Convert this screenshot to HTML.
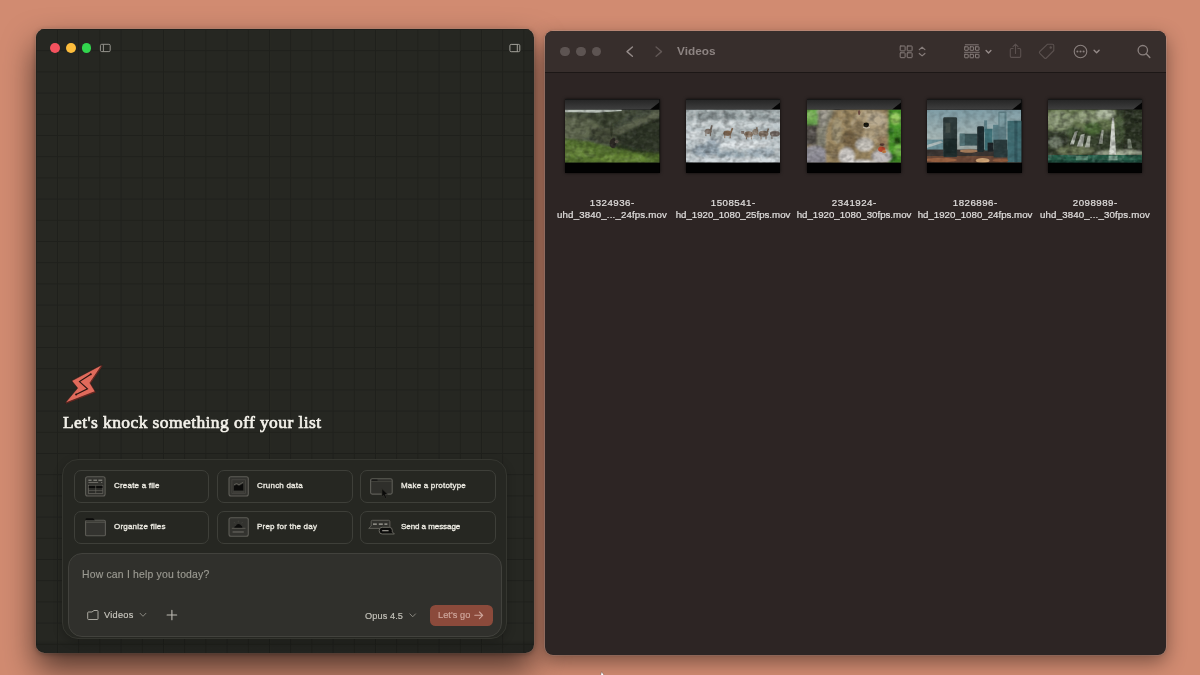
<!DOCTYPE html>
<html lang="en">
<head>
<meta charset="utf-8">
<title>Videos</title>
<style>
html,body{margin:0;padding:0;}
body{width:1200px;height:675px;overflow:hidden;background:#d18b71;position:relative;font-family:"Liberation Sans",sans-serif;}
.abs{position:absolute;}
#heading,.chip span,#ph,.sm,#go span,#ftitle,.lbl{will-change:transform;}
/* ---------- left app window ---------- */
#app{position:absolute;left:36.2px;top:29px;width:497.4px;height:624.4px;border-radius:8.5px;background:#262722;overflow:hidden;}
#appshadow{position:absolute;left:36.2px;top:29px;width:497.4px;height:624.4px;border-radius:8.5px;box-shadow:0 16px 32px rgba(0,0,0,.62),0 1px 5px rgba(0,0,0,.3),0 0 0 .6px rgba(255,255,255,.2);}
#app svg.grid{position:absolute;left:0;top:0;}
.tl{position:absolute;width:9.8px;height:9.8px;border-radius:50%;top:14.2px;}
#heading{position:absolute;left:26.3px;top:382.5px;font-family:"Liberation Serif",serif;font-weight:normal;font-size:17.5px;color:#f3f1ea;white-space:nowrap;line-height:20px;letter-spacing:.4px;-webkit-text-stroke:.65px #f3f1ea;}
#card{position:absolute;left:25.7px;top:429.5px;width:445.2px;height:180px;border-radius:16px;border:1px solid #353630;box-sizing:border-box;background:#262722;box-shadow:0 3px 10px rgba(0,0,0,.22);}
.chip{position:absolute;width:135.6px;height:33px;border:1px solid #3e3f39;border-radius:7px;box-sizing:border-box;background:#262722;}
.chip span{position:absolute;left:39.2px;top:9.15px;font-size:8px;letter-spacing:.2px;line-height:12px;color:#edebe3;white-space:nowrap;-webkit-text-stroke:.32px #edebe3;}
.chip svg{position:absolute;left:-1px;top:-1px;}
#input{position:absolute;left:31.5px;top:523.5px;width:433.8px;height:84px;border-radius:14px;border:1px solid #42423d;box-sizing:border-box;background:#30302c;}
#ph{position:absolute;left:12.9px;top:14.1px;font-size:10.4px;letter-spacing:.2px;-webkit-text-stroke:.15px #9b9a92;line-height:14px;color:#9b9a92;white-space:nowrap;}
.sm{position:absolute;-webkit-text-stroke:.15px #c9c7bf;font-size:9.2px;line-height:12px;color:#c9c7bf;white-space:nowrap;}
#go{position:absolute;left:361px;top:50.5px;width:62.8px;height:21.4px;border-radius:5.5px;background:#8b4a3b;}
#go span{position:absolute;left:8.4px;top:4.8px;font-size:9.2px;letter-spacing:.07px;-webkit-text-stroke:.18px #cfa79c;line-height:12px;color:#cfa79c;white-space:nowrap;}
/* ---------- finder window ---------- */
#finder{position:absolute;left:544.5px;top:30.5px;width:621px;height:624px;border-radius:8px;background:#2d2524;overflow:hidden;}
#findershadow{position:absolute;left:544.5px;top:30.5px;width:621px;height:624px;border-radius:8px;box-shadow:0 7px 20px rgba(0,0,0,.42),0 0 0 .6px rgba(255,255,255,.3),0 0 3px rgba(0,0,0,.2);}
#tbar{position:absolute;left:0;top:0;width:621px;height:41.5px;background:#372e2c;border-bottom:1px solid #1c1716;}
.gl{position:absolute;width:9.6px;height:9.6px;border-radius:50%;background:#5d5452;top:16px;}
#ftitle{position:absolute;left:132.5px;top:13px;font-size:11.8px;line-height:15px;font-weight:bold;color:#8d8482;white-space:nowrap;}
.thumb{position:absolute;top:68.6px;width:94.4px;height:73.9px;background:#000;box-shadow:0 0 3px rgba(0,0,0,.75);}
.l1{letter-spacing:.5px;margin-left:.5px}.l2{letter-spacing:.15px}
.thumb svg{position:absolute;left:0;top:0;}
.lbl{position:absolute;top:166.8px;width:140px;text-align:center;font-size:9.7px;line-height:12.25px;color:#e0dedd;white-space:nowrap;-webkit-text-stroke:.2px #e0dedd;}
</style>
</head>
<body>

<div id="appshadow"></div>
<div id="app">
  <svg class="grid" width="497" height="624" viewBox="0 0 497 624">
    <defs>
      <pattern id="gp" width="21.2" height="21.2" patternUnits="userSpaceOnUse" x="-0.2" y="0">
        <path d="M0.5 0V21.2M0 0.5H21.2" stroke="#1f201c" stroke-width="1" fill="none"/>
      </pattern>
    </defs>
    <rect width="497" height="624" fill="url(#gp)"/>
  </svg>
  <div class="abs" style="left:0;bottom:0;width:100%;height:14px;background:linear-gradient(rgba(0,0,0,0),rgba(0,0,0,.1) 30%)"></div>
  <div class="tl" style="left:13.7px;background:#f4525e;"></div>
  <div class="tl" style="left:29.6px;background:#fdbd3c;"></div>
  <div class="tl" style="left:45.4px;background:#32d64e;"></div>
  <svg class="abs" style="left:63px;top:13.5px" width="13" height="10" viewBox="0 0 13 10"><rect x="1.4" y="1.3" width="9.8" height="7.3" rx="1.3" fill="none" stroke="#94938c" stroke-width="1"/><path d="M4.4 1.4V8.5" stroke="#94938c" stroke-width="1"/></svg>
  <svg class="abs" style="left:472px;top:13.5px" width="13" height="10" viewBox="0 0 13 10"><rect x="1.9" y="1.4" width="9.9" height="7.3" rx="1.3" fill="none" stroke="#a4a39c" stroke-width="1"/><path d="M9.3 1.5V8.6" stroke="#a4a39c" stroke-width="1"/></svg>

  <div class="abs" style="left:.3px;top:.5px;width:0;height:0">
  <!-- logo -->
  <svg class="abs" style="left:26px;top:332px" width="44" height="44" viewBox="62.5 361.5 44 44">
    <polygon points="102.6,364.2 72.3,380.3 78.2,387.6 65.6,402.6 95.6,391 90.4,382.4" fill="#7f261f" transform="translate(.6,.7)"/>
    <polygon points="102.6,364.2 72.3,380.3 78.2,387.6 65.6,402.6 95.6,391 90.4,382.4" fill="#e06a5b" stroke="#1c1412" stroke-width=".5"/>
    <polyline points="91.3,373.7 80,381.1 88,388.3 76.6,394.1" fill="none" stroke="#2a1512" stroke-width="1.15"/>
    <circle cx="91.3" cy="373.7" r="1" fill="#2a1512"/><circle cx="76.6" cy="394.1" r="1" fill="#2a1512"/>
  </svg>

  <div id="heading">Let's knock something off your list</div>

  <div id="card"></div>
  <div class="chip" style="left:37.2px;top:440.6px"><svg width="135.6" height="33" viewBox="74 470 135.6 33" fill="none"><rect x="85.6" y="476.8" width="19.5" height="19.2" rx="2" fill="#33332f" stroke="#5e5d57" stroke-width="1.1"/>
<path d="M88.4 480.2H91.6M93.4 480.2H97M98.4 480.2H102.3" stroke="#b4b2aa" stroke-width=".8"/>
<path d="M88.4 482.5H98.2M101 482.5H102.3" stroke="#85837b" stroke-width=".7"/>
<rect x="88.5" y="485.3" width="14.3" height="8.2" fill="#2b2b28" stroke="#6b6a63" stroke-width=".7"/>
<rect x="88.8" y="485.7" width="13.7" height="2.3" fill="#0c0c0b"/>
<path d="M95.7 485.5V493.4M88.6 490.6H102.7" stroke="#6b6a63" stroke-width=".6"/></svg><span>Create a file</span></div>
  <div class="chip" style="left:180.6px;top:440.6px"><svg width="135.6" height="33" viewBox="217 470 135.6 33" fill="none"><rect x="229" y="476.8" width="19.3" height="19.2" rx="2" fill="#33332f" stroke="#5e5d57" stroke-width="1.1"/>
<rect x="231.9" y="479.8" width="13.5" height="13.5" fill="none" stroke="#4c4b45" stroke-width=".7"/>
<polygon points="234,486 236.6,484.8 239,486 243.2,483.5 243.2,490.6 234,490.6" fill="#0c0c0b"/>
<polyline points="234,484.7 236.6,483.5 239,484.7 243.2,482.2" stroke="#7b7971" stroke-width=".6"/>
<path d="M233 492H244.4" stroke="#5a5953" stroke-width=".6"/></svg><span>Crunch data</span></div>
  <div class="chip" style="left:324px;top:440.6px"><svg width="135.6" height="33" viewBox="360.4 470 135.6 33" fill="none"><rect x="371" y="478.7" width="21.6" height="15.4" rx="1.6" fill="#2f2f2b" stroke="#5e5d57" stroke-width="1.1"/>
<rect x="372.1" y="479.6" width="5.8" height="1" fill="#0c0c0b"/>
<path d="M371.4 481.5H392.4" stroke="#4c4b45" stroke-width=".6"/>
<path d="M382.3 488.6L388.1 494.3L385.5 494.6L387 497.8L385.6 498.5L384.1 495.2L382.3 496.8Z" fill="#0a0a09" stroke="#3a3935" stroke-width=".5"/></svg><span>Make a prototype</span></div>
  <div class="chip" style="left:37.2px;top:481.5px"><svg width="135.6" height="33" viewBox="74 511 135.6 33" fill="none"><rect x="85.6" y="520.3" width="19.8" height="15.5" rx="1.4" fill="#33332f" stroke="#5e5d57" stroke-width="1.1"/>
<path d="M85.6 519.2Q85.6 518.3 86.6 518.3H92.6Q93.4 518.3 93.9 519L94.8 520.3H85.6Z" fill="#0c0c0b"/>
<path d="M86.2 522.2H104.9" stroke="#6b6a63" stroke-width=".7"/></svg><span>Organize files</span></div>
  <div class="chip" style="left:180.6px;top:481.5px"><svg width="135.6" height="33" viewBox="217 511 135.6 33" fill="none"><rect x="229" y="517.7" width="19.3" height="18.6" rx="2" fill="#33332f" stroke="#5e5d57" stroke-width="1.1"/>
<path d="M234.3 528Q234.2 526.2 235.9 526Q236.4 523.9 238.5 523.9Q240.5 523.9 241.1 525.6Q242.5 525.9 242.4 528Z" fill="#0c0c0b"/>
<path d="M231.8 528.3H245.5" stroke="#6b6a63" stroke-width=".7"/>
<path d="M232.6 532H243.8" stroke="#8b8981" stroke-width=".7"/>
<path d="M238.3 520.6V522.4M234 522L235 523.4M242.6 522L241.6 523.4" stroke="#4c4b45" stroke-width=".6"/></svg><span>Prep for the day</span></div>
  <div class="chip" style="left:324px;top:481.5px"><svg width="135.6" height="33" viewBox="360.4 511 135.6 33" fill="none"><path d="M369.1 528.4L371.6 526V521.6Q371.6 520.3 372.9 520.3H389Q390.3 520.3 390.3 521.6V527.1Q390.3 528.4 389 528.4Z" fill="#30302c" stroke="#5e5d57" stroke-width="1"/>
<path d="M373.4 524.1H377.2M379.2 524.1H383.2M384.8 524.1H387.8" stroke="#a8a69e" stroke-width="1.1"/>
<path d="M394.8 534L392.7 531.9V530.3Q392.7 527.3 389.7 527.3H382.6Q379.6 527.3 379.6 530.3V531Q379.6 534 382.6 534Z" fill="#0b0b0a" stroke="#6a6962" stroke-width="1"/>
<path d="M382.6 530.7H389" stroke="#a8a69e" stroke-width="1.1"/></svg><span style="letter-spacing:-.06px">Send a message</span></div>

  <div id="input">
    <div id="ph">How can I help you today?</div>
    <div class="sm" style="left:34.6px;top:54.8px;letter-spacing:.28px">Videos</div>
    <div class="sm" style="left:296px;top:55.7px;letter-spacing:.1px;color:#c2c0b8">Opus 4.5</div>
    <div id="go"><span>Let's go</span></div>
    <svg class="abs" style="left:-1px;top:-1px" width="434.5" height="84" viewBox="68 553 434.5 84" fill="none" stroke-linecap="round" stroke-linejoin="round">
      <path d="M87.7 612.6Q87.7 612 88.3 612H92L94 610.5H97.4Q98 610.5 98 611.1V618.9Q98 619.5 97.4 619.5H88.3Q87.7 619.5 87.7 618.9Z" stroke="#aaa8a0" stroke-width="1"/>
      <path d="M140.1 613.3L143 616.3L145.9 613.3" stroke="#8a8880" stroke-width="1"/>
      <path d="M167.1 615H176.7M171.9 610.2V619.8" stroke="#bdbbb3" stroke-width="1.1"/>
      <path d="M409.9 613.9L412.7 616.8L415.5 613.9" stroke="#8a8880" stroke-width="1"/>
      <path d="M474.8 615.3H482.6M479.4 612L482.7 615.3L479.4 618.6" stroke="#cfa79c" stroke-width="1.1"/>
    </svg>
  </div>
</div>
</div>

<svg width="0" height="0" style="position:absolute">
  <defs>
    <linearGradient id="band" x1="0" y1="0" x2="0" y2="1"><stop offset="0" stop-color="#242424"/><stop offset="1" stop-color="#3f3f3f"/></linearGradient>
    <clipPath id="imgclip"><rect x="0" y="10.8" width="95" height="53.4"/></clipPath>
    <filter id="b1" x="-20%" y="-20%" width="140%" height="140%"><feGaussianBlur stdDeviation="1"/></filter>
    <filter id="b2" x="-20%" y="-20%" width="140%" height="140%"><feGaussianBlur stdDeviation="2"/></filter>
    <filter id="nzd" x="0" y="0" width="100%" height="100%"><feTurbulence type="fractalNoise" baseFrequency=".16 .2" numOctaves="2" seed="4"/><feColorMatrix type="matrix" values="0 0 0 0 0  0 0 0 0 0  0 0 0 0 0  1.8 1.4 0 0 -1.3"/></filter>
    <filter id="nzl" x="0" y="0" width="100%" height="100%"><feTurbulence type="fractalNoise" baseFrequency=".18 .22" numOctaves="2" seed="11"/><feColorMatrix type="matrix" values="0 0 0 0 1  0 0 0 0 1  0 0 0 0 1  1.2 1.6 0 0 -1.3"/></filter>
    <filter id="b08" x="-30%" y="-20%" width="160%" height="140%"><feGaussianBlur stdDeviation=".8"/></filter>
    <filter id="b05" x="-20%" y="-20%" width="140%" height="140%"><feGaussianBlur stdDeviation=".5"/></filter>
  </defs>
</svg>
<div id="findershadow"></div>
<div id="finder">
  <div id="tbar">
    <div class="gl" style="left:15.7px"></div>
    <div class="gl" style="left:31.5px"></div>
    <div class="gl" style="left:47.4px"></div>
    <div id="ftitle">Videos</div>
    <svg class="abs" style="left:0;top:0" width="621" height="42" viewBox="544.5 30.5 621 42" fill="none" stroke-linecap="round" stroke-linejoin="round">
      <path d="M631.9 46.5L626.5 51.1L631.9 55.7" stroke="#958b89" stroke-width="1.4"/>
      <path d="M655.6 46.5L661 51.1L655.6 55.7" stroke="#625856" stroke-width="1.4"/>
      <g stroke="#877d7b" stroke-width="1">
        <rect x="899.7" y="45.5" width="4.9" height="4.9" rx=".6"/><rect x="906.7" y="45.5" width="4.9" height="4.9" rx=".6"/>
        <rect x="899.7" y="52.3" width="4.9" height="4.9" rx=".6"/><rect x="906.7" y="52.3" width="4.9" height="4.9" rx=".6"/>
        <path d="M918.8 49.1L921.6 46.7L924.4 49.1M918.8 53L921.6 55.4L924.4 53" stroke-width="1.2"/>
        <path d="M964.8 44.3H977.8M964 51.8H978.8" stroke-width=".9"/>
        <rect x="964.2" y="46.3" width="3.5" height="3.5" rx=".3"/><rect x="969.6" y="46.3" width="3.5" height="3.5" rx=".3"/><rect x="975" y="46.3" width="3.5" height="3.5" rx=".3"/>
        <rect x="964.2" y="53.8" width="3.5" height="3.5" rx=".3"/><rect x="969.6" y="53.8" width="3.5" height="3.5" rx=".3"/><rect x="975" y="53.8" width="3.5" height="3.5" rx=".3"/>
      </g>
      <path d="M985.6 50L988 52.4L990.4 50" stroke="#958b89" stroke-width="1.4"/>
      <g stroke="#5b514f" stroke-width="1.1" transform="translate(-.4,-.6)">
        <path d="M1013 48.6H1011.4Q1010.2 48.6 1010.2 49.8V56.3Q1010.2 57.5 1011.4 57.5H1019.4Q1020.6 57.5 1020.6 56.3V49.8Q1020.6 48.6 1019.4 48.6H1017.8"/>
        <path d="M1015.4 53.6V44.4M1012.9 46.8L1015.4 44.3L1017.9 46.8"/>
        <path d="M1047.2 44.4H1052.4Q1053.7 44.4 1053.7 45.7V50.6L1046.2 58.1Q1045.3 59 1044.4 58.1L1039.7 53.4Q1038.8 52.5 1039.7 51.6Z"/>
        <circle cx="1050.6" cy="47.5" r=".7" fill="#5b514f"/>
      </g>
      <circle cx="1080" cy="51" r="6.3" stroke="#8a807e" stroke-width="1.1"/>
      <g fill="#8a807e"><circle cx="1076.9" cy="51" r="1.05"/><circle cx="1080" cy="51" r="1.05"/><circle cx="1083.1" cy="51" r="1.05"/></g>
      <path d="M1093.6 49.8L1096.1 52.3L1098.6 49.8" stroke="#958b89" stroke-width="1.4"/>
      <circle cx="1142.3" cy="49.7" r="4.7" stroke="#8a807e" stroke-width="1.3"/>
      <path d="M1145.8 53.3L1149.3 57" stroke="#8a807e" stroke-width="1.5"/>
    </svg>
  </div>
  <div class="thumb" style="left:20.7px"><svg width="94.4" height="73.9" viewBox="0 0 95 74.5" preserveAspectRatio="none"><rect x="0" y="0" width="95" height="10.8" fill="url(#band)"/><polygon points="85.4,10.8 95,3.3 95,10.8" fill="#050505"/><rect x="0" y="0" width="95" height=".8" fill="#151515"/>
  <g clip-path="url(#imgclip)">
    <rect x="0" y="10.8" width="95" height="53.4" fill="#485040"/>
    <g filter="url(#b1)">
      <polygon points="-3,12 12,13 30,14 45,13 72,11 72,16 40,23 20,20 -3,19" fill="#4b5341"/>
      <polygon points="-3,19 20,20 36,24 33,36 15,41 -3,40" fill="#60684f"/>
      <polygon points="24,16 66,12 52,25 38,31" fill="#3c4433"/>
      <polygon points="25,31 50,26 57,46 30,43" fill="#444c39"/>
      <polygon points="48,31 98,9 98,18 55,37" fill="#5a614c"/>
      <polygon points="52,37 98,17 98,53 75,51 56,47" fill="#2e3626"/>
      <polygon points="-3,39.5 20,42 45,48 70,53 98,55 98,68 -3,68" fill="#55722e"/>
      <ellipse cx="14" cy="53" rx="16" ry="6" fill="#67873a"/>
      <ellipse cx="55" cy="60" rx="28" ry="4" fill="#698a39"/>
      <polygon points="50,46 75,51 98,53 98,56 70,54 48,49" fill="#2f3a22"/>
    </g>
    <g filter="url(#b05)">
      <polygon points="-1,10 57,10 57,12.2 45,12.8 30,13.9 12,13.3 -1,13.4" fill="#b9c1b9"/>
      <ellipse cx="48.3" cy="44.8" rx="3.4" ry="4.8" fill="#2a2722"/>
      <ellipse cx="49" cy="40.3" rx="1.5" ry="1.5" fill="#2a2722"/>
      <ellipse cx="52" cy="43" rx="2" ry="1.6" fill="#6d6358"/>
      <ellipse cx="46.8" cy="31" rx="1.2" ry="7" fill="#343b2a"/>
    </g>
    <rect x="0" y="10.8" width="95" height="53.4" filter="url(#nzd)" opacity="0.32"/><rect x="0" y="10.8" width="95" height="53.4" filter="url(#nzl)" opacity="0.12"/>
  </g><rect x="0" y="64.2" width="95" height="10.3" fill="#020202"/></svg></div>
  <div class="thumb" style="left:141.4px"><svg width="94.4" height="73.9" viewBox="0 0 95 74.5" preserveAspectRatio="none"><rect x="0" y="0" width="95" height="10.8" fill="url(#band)"/><polygon points="85.4,10.8 95,3.3 95,10.8" fill="#050505"/><rect x="0" y="0" width="95" height=".8" fill="#151515"/>
  <g clip-path="url(#imgclip)">
    <rect x="0" y="10.8" width="95" height="53.4" fill="#bcc6ca"/>
    <g filter="url(#b1)">
      <rect x="-3" y="9" width="101" height="13" fill="#a3adaf"/>
      <ellipse cx="32" cy="17" rx="22" ry="4.5" fill="#8d9799"/>
      <ellipse cx="78" cy="19" rx="18" ry="4" fill="#98a2a4"/>
      <ellipse cx="45" cy="26" rx="44" ry="4" fill="#cbd3d5"/>
      <ellipse cx="20" cy="52" rx="14" ry="6" fill="#93a3ae"/>
      <ellipse cx="45" cy="57" rx="14" ry="5" fill="#9aaab4"/>
      <ellipse cx="75" cy="54" rx="14" ry="5" fill="#a3b1ba"/>
      <ellipse cx="28" cy="44" rx="8" ry="4" fill="#a0aeb8"/>
      <ellipse cx="60" cy="46" rx="26" ry="4" fill="#dfe5e8"/>
      <ellipse cx="10" cy="37" rx="9" ry="5" fill="#d5dcdf"/>
      <ellipse cx="50" cy="62" rx="50" ry="3" fill="#d4dce0"/>
      <rect x="14" y="30" width="80" height="8" fill="#b4bcbe" opacity=".7"/>
    </g>
    <g filter="url(#b05)" fill="#74685e">
      <ellipse cx="22.3" cy="32.6" rx="3.6" ry="2.7"/><rect x="24.6" y="26.4" width="1.7" height="5.4" transform="rotate(15 25 29)"/><rect x="19.5" y="34" width="1" height="3.5"/><rect x="24" y="34" width="1" height="3.5"/>
      <ellipse cx="41.6" cy="34.6" rx="4" ry="2.8" fill="#806650"/><rect x="45.3" y="29" width="1.7" height="5.2" transform="rotate(20 46 31)" fill="#806650"/><rect x="38.5" y="36" width="1" height="3.5" fill="#806650"/><rect x="44" y="36" width="1" height="3.5" fill="#806650"/>
      <ellipse cx="63" cy="35.6" rx="4.4" ry="3.1" fill="#7b6755"/><rect x="60.3" y="37" width="1" height="3.6" fill="#7b6755"/><rect x="65.3" y="37" width="1" height="3.6" fill="#7b6755"/>
      <ellipse cx="69.8" cy="33.2" rx="3" ry="3" fill="#857564"/><rect x="70.5" y="28.5" width="1.6" height="4" fill="#857564"/>
      <ellipse cx="78" cy="35" rx="5" ry="3" fill="#7d6d5e"/><rect x="81.5" y="29.5" width="1.6" height="4.6" transform="rotate(18 82 32)" fill="#7d6d5e"/><rect x="75" y="37" width="1" height="3.8" fill="#7d6d5e"/><rect x="80" y="37" width="1" height="3.8" fill="#7d6d5e"/>
      <ellipse cx="89.5" cy="35" rx="5" ry="2.9" fill="#6f655e"/><rect x="86" y="37" width="1" height="3.5" fill="#6f655e"/>
      <rect x="55.5" y="32.3" width="3.2" height="2.8" fill="#6f655e"/>
    </g>
    <rect x="0" y="10.8" width="95" height="53.4" filter="url(#nzd)" opacity="0.3"/><rect x="0" y="10.8" width="95" height="53.4" filter="url(#nzl)" opacity="0.45"/>
  </g><rect x="0" y="64.2" width="95" height="10.3" fill="#020202"/></svg></div>
  <div class="thumb" style="left:262.1px"><svg width="94.4" height="73.9" viewBox="0 0 95 74.5" preserveAspectRatio="none"><rect x="0" y="0" width="95" height="10.8" fill="url(#band)"/><polygon points="85.4,10.8 95,3.3 95,10.8" fill="#050505"/><rect x="0" y="0" width="95" height=".8" fill="#151515"/>
  <g clip-path="url(#imgclip)">
    <rect x="0" y="10.8" width="95" height="53.4" fill="#8f8062"/>
    <g filter="url(#b1)">
      <rect x="-3" y="8" width="15" height="19" fill="#62a044"/>
      <ellipse cx="4" cy="17" rx="4" ry="5" fill="#86c062"/>
      <ellipse cx="15" cy="13" rx="5" ry="3" fill="#cfc4c0"/>
      <rect x="-3" y="26" width="13" height="20" fill="#4a4540"/>
      <ellipse cx="4" cy="34" rx="3" ry="3" fill="#6a6560"/>
      <polygon points="11,10 27,10 22,30 20,48 10,48" fill="#8a8878"/>
      <polygon points="14,10 22,10 18,26 13,30" fill="#a5a196"/>
      <ellipse cx="8" cy="58" rx="14" ry="11" fill="#908e98"/>
      <ellipse cx="6" cy="52" rx="6" ry="3" fill="#a9a7b0"/>
      <path d="M19 68V40Q19 22 30 13Q38 8 52 9H82V68Z" fill="#9c8862"/>
      <ellipse cx="44" cy="41" rx="8" ry="11" fill="#766445"/>
      <ellipse cx="30" cy="32" rx="5" ry="13" fill="#a59878"/>
      <ellipse cx="64" cy="27" rx="19" ry="17" fill="#ad9c7c"/>
      <ellipse cx="70" cy="20" rx="10" ry="7" fill="#b9ab90"/>
      <ellipse cx="52" cy="30" rx="6" ry="10" fill="#8e7c5c"/>
      <ellipse cx="76" cy="42" rx="5" ry="5" fill="#9a8060"/>
      <rect x="82" y="8" width="16" height="60" fill="#4a982c"/>
      <ellipse cx="89" cy="20" rx="5" ry="6" fill="#98cc60"/>
      <ellipse cx="84" cy="33" rx="3" ry="4" fill="#2a6a1c"/>
      <ellipse cx="91" cy="42" rx="3.5" ry="4" fill="#1a4010"/>
      <ellipse cx="92" cy="52" rx="5" ry="6" fill="#70b844"/>
      <ellipse cx="86" cy="60" rx="4" ry="4" fill="#2b661c"/>
      <ellipse cx="58" cy="46" rx="9" ry="7" fill="#d0ccc4"/>
      <ellipse cx="40" cy="58" rx="8" ry="9" fill="#d4d0cc"/>
      <ellipse cx="75" cy="58" rx="10" ry="7" fill="#c0bcbc"/>
      <ellipse cx="55" cy="65" rx="16" ry="3.5" fill="#e6e4e2"/>
      <ellipse cx="28" cy="56" rx="4" ry="8" fill="#857354"/>
    </g>
    <g filter="url(#b05)">
      <ellipse cx="59.6" cy="26" rx="2.7" ry="2.4" fill="#15120f"/>
      <path d="M56.4 28.4Q59.6 30.6 63.2 28.6" stroke="#ddd6c8" stroke-width=".9" fill="none"/>
      <ellipse cx="75.2" cy="50.6" rx="3.6" ry="2.8" fill="#c1492f"/>
      <ellipse cx="77.6" cy="53" rx="2.2" ry="1.6" fill="#d98a4a"/>
      <ellipse cx="75.6" cy="46" rx="2.4" ry="1.5" fill="#5a3c34"/>
      <ellipse cx="52.5" cy="13.6" rx="1.2" ry="2.6" fill="#6b4a40"/>
    </g>
    <rect x="0" y="10.8" width="95" height="53.4" filter="url(#nzd)" opacity="0.28"/><rect x="0" y="10.8" width="95" height="53.4" filter="url(#nzl)" opacity="0.15"/>
  </g><rect x="0" y="64.2" width="95" height="10.3" fill="#020202"/></svg></div>
  <div class="thumb" style="left:382.8px"><svg width="94.4" height="73.9" viewBox="0 0 95 74.5" preserveAspectRatio="none"><rect x="0" y="0" width="95" height="10.8" fill="url(#band)"/><polygon points="85.4,10.8 95,3.3 95,10.8" fill="#050505"/><rect x="0" y="0" width="95" height=".8" fill="#151515"/>
  <defs><linearGradient id="sky4" x1="0" y1="0" x2="0" y2="1"><stop offset="0" stop-color="#7e9ca5"/><stop offset=".55" stop-color="#a8b8b7"/><stop offset="1" stop-color="#8a8f88"/></linearGradient></defs>
  <g clip-path="url(#imgclip)">
    <rect x="0" y="10.8" width="95" height="53.4" fill="url(#sky4)"/>
    <g filter="url(#b05)">
      <rect x="-2" y="41" width="20" height="11" fill="#6d939b"/>
      <polygon points="-2,47 14,42 16,44 -2,50" fill="#aebcbc"/>
      <rect x="-2" y="51" width="99" height="15" fill="#3b3430"/>
      <rect x="-2" y="57.5" width="99" height="8" fill="#6e4a37"/>
      <rect x="33" y="35" width="18" height="12" fill="#3b5559"/>
      <rect x="33" y="35" width="5" height="12" fill="#55767a"/>
      <rect x="16.3" y="18.4" width="14" height="40" rx="1.5" fill="#2d3a3a"/>
      <rect x="17" y="40" width="13" height="18" fill="#1f2a2a"/>
      <rect x="18.5" y="24" width="5" height="10" fill="#4b5650" opacity=".7"/>
      <rect x="50.5" y="27.5" width="7" height="26" rx="1.5" fill="#1e2a2d"/>
      <rect x="57.5" y="21.5" width="3" height="12" fill="#5d8088"/>
      <rect x="58" y="30" width="8" height="22" fill="#3d7077"/>
      <rect x="61" y="44" width="6" height="9" fill="#1c2426"/>
      <rect x="66.5" y="26" width="6" height="18" fill="#5a8088"/>
      <rect x="71.8" y="12.5" width="8.2" height="30" rx="1" fill="#5f7f86"/>
      <rect x="73" y="14" width="5" height="14" fill="#7c9ca2"/>
      <rect x="67" y="41" width="14" height="18" fill="#2a3a3c"/>
      <rect x="81" y="22" width="16" height="42" fill="#3f6d73"/>
      <rect x="88" y="22" width="3" height="42" fill="#33585e"/>
      <ellipse cx="56" cy="62" rx="7" ry="2.5" fill="#d3a676"/>
      <ellipse cx="42" cy="52.5" rx="9" ry="1.8" fill="#a67c5a"/>
      <ellipse cx="14" cy="61.5" rx="16" ry="2.2" fill="#9a6242"/>
      <ellipse cx="74" cy="62" rx="8" ry="1.6" fill="#8f5a3c"/>
    </g>
    <rect x="0" y="10.8" width="95" height="53.4" filter="url(#nzd)" opacity="0.15"/><rect x="0" y="10.8" width="95" height="53.4" filter="url(#nzl)" opacity="0.06"/>
  </g><rect x="0" y="64.2" width="95" height="10.3" fill="#020202"/></svg></div>
  <div class="thumb" style="left:503.5px"><svg width="94.4" height="73.9" viewBox="0 0 95 74.5" preserveAspectRatio="none"><rect x="0" y="0" width="95" height="10.8" fill="url(#band)"/><polygon points="85.4,10.8 95,3.3 95,10.8" fill="#050505"/><rect x="0" y="0" width="95" height=".8" fill="#151515"/>
  <g clip-path="url(#imgclip)">
    <rect x="0" y="10.8" width="95" height="53.4" fill="#38422e"/>
    <g filter="url(#b1)">
      <rect x="-3" y="8" width="72" height="24" fill="#66764f"/>
      <ellipse cx="12" cy="22" rx="14" ry="10" fill="#8a9874"/>
      <ellipse cx="40" cy="18" rx="16" ry="6" fill="#8e9c78"/>
      <ellipse cx="58" cy="15" rx="10" ry="5" fill="#a9b49a"/>
      <ellipse cx="45" cy="30" rx="9" ry="7" fill="#4d6a38"/>
      <ellipse cx="25" cy="33" rx="8" ry="5" fill="#4a5c3a"/>
      <rect x="76" y="8" width="22" height="46" fill="#2b3323"/>
      <ellipse cx="72" cy="30" rx="5" ry="14" fill="#4a5a3a"/>
      <rect x="-3" y="36" width="24" height="12" fill="#2e3626"/>
      <ellipse cx="8" cy="44" rx="7" ry="6" fill="#6f7a68"/>
      <ellipse cx="27" cy="52" rx="20" ry="5" fill="#6b7652"/>
      <ellipse cx="72" cy="54.5" rx="24" ry="3" fill="#aab49c"/>
    </g>
    <g filter="url(#b08)" fill="#c9cec4" opacity=".9">
      <polygon points="27,33 30,32 26,46 22,46"/>
      <polygon points="33,36 37,35 35,48 29,48"/>
      <polygon points="40,37 43,37 42,49 37,49" fill="#b5bbae"/>
      <polygon points="54,31 56,31 55,45 51,45" fill="#b9bfb2"/>
      <polygon points="64.5,19 66.5,19 68.5,56 61.5,56" fill="#e0e3dc"/>
      <polygon points="80,40 83,40 85,50 80,50" fill="#7f8878"/>
    </g>
    <rect x="0" y="56.5" width="95" height="8" fill="#27604b"/>
    <g filter="url(#b05)"><rect x="28" y="57.5" width="12" height="6" fill="#5d907a"/><rect x="61" y="57" width="9" height="7" fill="#7aa592"/><rect x="0" y="61.8" width="95" height="3" fill="#1e4a3a"/></g>
    <rect x="0" y="10.8" width="95" height="53.4" filter="url(#nzd)" opacity="0.4"/><rect x="0" y="10.8" width="95" height="53.4" filter="url(#nzl)" opacity="0.2"/>
  </g><rect x="0" y="64.2" width="95" height="10.3" fill="#020202"/></svg></div>
  <div class="lbl" style="left:-2.1px"><span class="l1">1324936-</span><br><span class="l2">uhd_3840_..._24fps.mov</span></div>
  <div class="lbl" style="left:118.6px"><span class="l1">1508541-</span><br>hd_1920_1080_25fps.mov</div>
  <div class="lbl" style="left:239.3px"><span class="l1">2341924-</span><br>hd_1920_1080_30fps.mov</div>
  <div class="lbl" style="left:360px"><span class="l1">1826896-</span><br>hd_1920_1080_24fps.mov</div>
  <div class="lbl" style="left:480.7px"><span class="l1">2098989-</span><br><span class="l2">uhd_3840_..._30fps.mov</span></div>
</div>

<svg class="abs" style="left:596px;top:667px" width="12" height="8" viewBox="596 667 12 8"><polygon points="601.6,671.6 600.4,676 604.6,676" fill="#fff" stroke="#5a3a30" stroke-width=".4"/></svg>
</body>
</html>
